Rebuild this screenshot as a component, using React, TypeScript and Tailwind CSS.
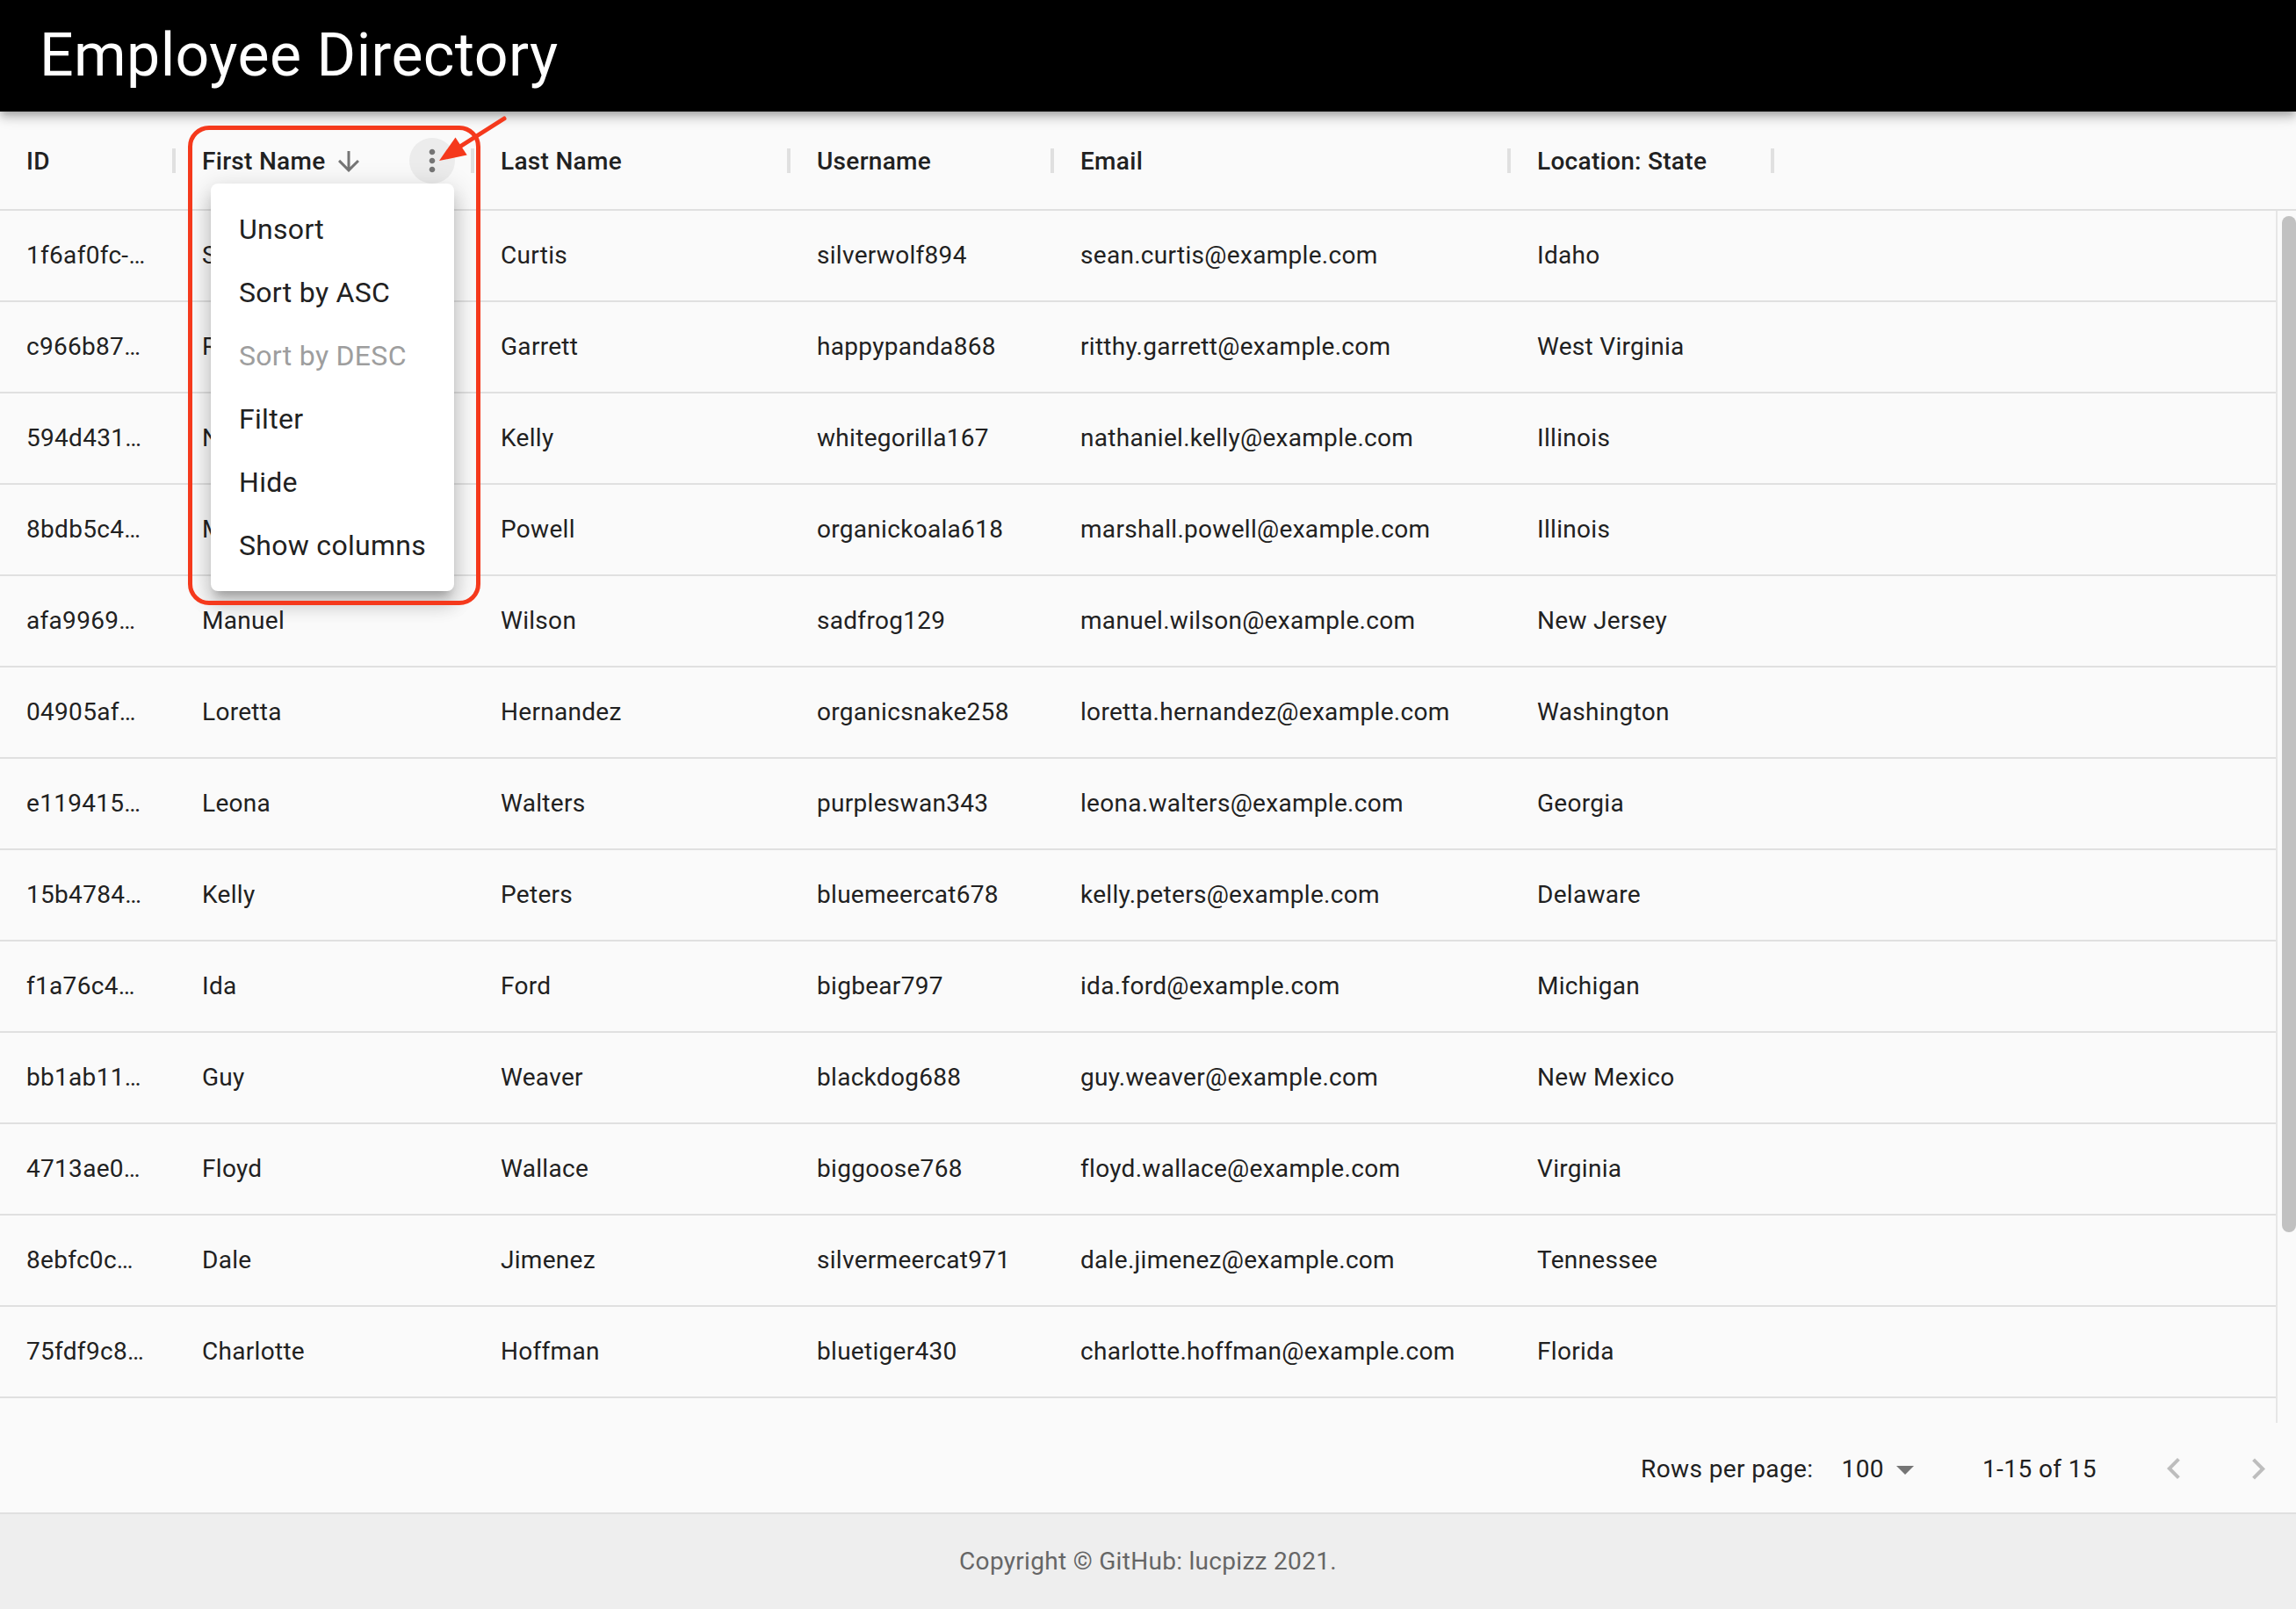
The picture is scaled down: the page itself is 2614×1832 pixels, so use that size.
import React from "react";

const rows = [
  ["1f6af0fc-…", "Sean", "Curtis", "silverwolf894", "sean.curtis@example.com", "Idaho"],
  ["c966b87…", "Ritthy", "Garrett", "happypanda868", "ritthy.garrett@example.com", "West Virginia"],
  ["594d431…", "Nathaniel", "Kelly", "whitegorilla167", "nathaniel.kelly@example.com", "Illinois"],
  ["8bdb5c4…", "Marshall", "Powell", "organickoala618", "marshall.powell@example.com", "Illinois"],
  ["afa9969…", "Manuel", "Wilson", "sadfrog129", "manuel.wilson@example.com", "New Jersey"],
  ["04905af…", "Loretta", "Hernandez", "organicsnake258", "loretta.hernandez@example.com", "Washington"],
  ["e119415…", "Leona", "Walters", "purpleswan343", "leona.walters@example.com", "Georgia"],
  ["15b4784…", "Kelly", "Peters", "bluemeercat678", "kelly.peters@example.com", "Delaware"],
  ["f1a76c4…", "Ida", "Ford", "bigbear797", "ida.ford@example.com", "Michigan"],
  ["bb1ab11…", "Guy", "Weaver", "blackdog688", "guy.weaver@example.com", "New Mexico"],
  ["4713ae0…", "Floyd", "Wallace", "biggoose768", "floyd.wallace@example.com", "Virginia"],
  ["8ebfc0c…", "Dale", "Jimenez", "silvermeercat971", "dale.jimenez@example.com", "Tennessee"],
  ["75fdf9c8…", "Charlotte", "Hoffman", "bluetiger430", "charlotte.hoffman@example.com", "Florida"],
];

const widths = ["w-[200px]", "w-[340px]", "w-[360px]", "w-[300px]", "w-[520px]", "w-[300px]"];
const labels = ["ID", "First Name", "Last Name", "Username", "Email", "Location: State"];

function Sep() {
  return <div className="w-[4px] h-[28px] bg-[#e0e0e0] shrink-0" />;
}

function MoreVert() {
  return (
    <svg width="40" height="40" viewBox="0 0 24 24" fill="#757575">
      <path d="M12 8c1.1 0 2-.9 2-2s-.9-2-2-2-2 .9-2 2 .9 2 2 2zm0 2c-1.1 0-2 .9-2 2s.9 2 2 2 2-.9 2-2-.9-2-2-2zm0 6c-1.1 0-2 .9-2 2s.9 2 2 2 2-.9 2-2-.9-2-2-2z" />
    </svg>
  );
}

function ArrowDown() {
  return (
    <svg width="36" height="36" viewBox="0 0 24 24" fill="#757575">
      <path d="M20 12l-1.41-1.41L13 16.17V4h-2v12.17l-5.58-5.59L4 12l8 8 8-8z" />
    </svg>
  );
}

export default function App() {
  const menuItems = ["Unsort", "Sort by ASC", "Sort by DESC", "Filter", "Hide", "Show columns"];
  return (
    <div className="relative w-[2614px] h-[1832px] overflow-hidden flex flex-col bg-[#fafafa] font-['Roboto',sans-serif] text-[#212121]">
      {/* App bar */}
      <header className="relative z-10 h-[127px] shrink-0 bg-black flex items-center pl-[45px] shadow-[0_4px_8px_-2px_rgba(0,0,0,0.2),0_8px_10px_0_rgba(0,0,0,0.14),0_2px_20px_0_rgba(0,0,0,0.12)]">
        <h1 className="text-white text-[68px] leading-[1.2] font-normal tracking-[0.4px]">Employee Directory</h1>
      </header>

      {/* Column headers */}
      <div className="h-[113px] shrink-0 flex border-b-2 border-[#e0e0e0]">
        {labels.map((l, i) => (
          <div key={l} className={`${widths[i]} shrink-0 h-full flex items-center pl-[30px]`}>
            <span className="text-[28px] font-medium leading-[1.5] whitespace-nowrap tracking-[0.3px] pt-[3px]">{l}</span>
            {i === 1 && (
              <>
                <span className="ml-[8px] flex items-center pt-[3px]"><ArrowDown /></span>
                <div className="flex-1" />
                <div className="w-[52px] h-[52px] rounded-full bg-[#ececec] flex items-center justify-center">
                  <MoreVert />
                </div>
                <div className="w-[18px]" />
              </>
            )}
            {i !== 1 && <div className="flex-1" />}
            <Sep />
          </div>
        ))}
      </div>

      {/* Body + scrollbar */}
      <div className="h-[1380px] shrink-0 flex">
        <div className="flex-1 flex flex-col">
          {rows.map((r, ri) => (
            <div key={ri} className="h-[104px] shrink-0 flex items-center border-b-2 border-[#e0e0e0]">
              {r.map((c, ci) => (
                <div key={ci} className={`${widths[ci]} shrink-0 pl-[30px] text-[28px] leading-[1.5] whitespace-nowrap tracking-[0.3px]`}>
                  {c}
                </div>
              ))}
            </div>
          ))}
        </div>
        <div className="w-[23px] shrink-0 border-l-2 border-[#e6e6e6] pl-[5px]">
          <div className="w-[16px] h-[1157px] mt-[6px] rounded-full bg-[#c1c1c1]" />
        </div>
      </div>

      {/* Pagination */}
      <div className="h-[104px] shrink-0 border-b-2 border-[#e0e0e0] flex items-center justify-end text-[28px] leading-[1.5] tracking-[0.4px] pt-[4px]">
        <span>Rows per page:</span>
        <span className="ml-[32px]">100</span>
        <span className="w-[48px] h-[48px] flex items-center justify-center">
          <svg width="48" height="48" viewBox="0 0 24 24" fill="#757575"><path d="M7 10l5 5 5-5z" /></svg>
        </span>
        <span className="ml-[64px]">1-15 of 15</span>
        <div className="ml-[40px] mr-[-5px] flex">
          <div className="w-[96px] h-[96px] flex items-center justify-center">
            <svg width="48" height="48" viewBox="0 0 24 24" fill="#bdbdbd"><path d="M15.41 16.09l-4.58-4.59 4.58-4.59L14 5.5l-6 6 6 6z" /></svg>
          </div>
          <div className="w-[96px] h-[96px] flex items-center justify-center">
            <svg width="48" height="48" viewBox="0 0 24 24" fill="#bdbdbd"><path d="M8.59 16.34l4.58-4.59-4.58-4.59L10 5.75l6 6-6 6z" /></svg>
          </div>
        </div>
      </div>

      {/* Footer */}
      <footer className="flex-1 bg-[#eeeeee] flex items-center justify-center">
        <span className="text-[28px] text-[#666666] leading-[1.5] tracking-[0.3px]">Copyright © GitHub: lucpizz 2021.</span>
      </footer>

      {/* Column menu overlay */}
      <div className="absolute left-[240px] top-[209px] w-[277px] py-[16px] bg-white rounded-[8px] shadow-[0_10px_10px_-6px_rgba(0,0,0,0.2),0_16px_20px_2px_rgba(0,0,0,0.14),0_6px_28px_4px_rgba(0,0,0,0.12)] z-20">
        {menuItems.map((m) => (
          <div key={m} className={`h-[72px] flex items-center pl-[32px] text-[32px] leading-[1.5] whitespace-nowrap tracking-[0.3px] ${m === "Sort by DESC" ? "text-[#9e9e9e]" : "text-[#212121]"}`}>
            {m}
          </div>
        ))}
      </div>

      {/* Annotation */}
      <div className="absolute left-[214px] top-[143px] w-[333px] h-[546px] border-[5px] border-[#f5391c] rounded-[24px] z-30 pointer-events-none" />
      <svg className="absolute left-0 top-0 z-30 pointer-events-none" width="700" height="300" viewBox="0 0 700 300">
        <line x1="574" y1="135" x2="522" y2="168" stroke="#f5391c" strokeWidth="5" strokeLinecap="round" />
        <polygon points="500,183 518.5,156.4 531.7,176.6" fill="#f5391c" />
      </svg>
    </div>
  );
}
